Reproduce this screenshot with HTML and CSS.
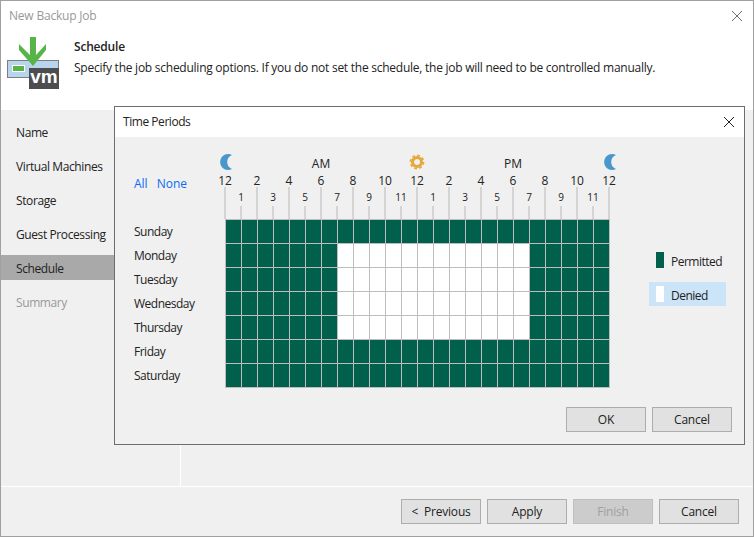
FILE: index.html
```html
<!DOCTYPE html>
<html lang="en">
<head>
    <meta charset="UTF-8">
    <title>New Backup Job</title>
    <link rel="stylesheet" href="styles.css">
</head>
<body>
    <div class="wizard">
        <div class="wizard-header">
            <div class="titlebar">
                <span class="wizard-title">New Backup Job</span>
                <svg class="close-icon" width="12" height="12" viewBox="0 0 12 12"><path d="M1 1L11 11M11 1L1 11" stroke="#6f6f6f" fill="none"/></svg>
            </div>
            <div class="step-info">
                <svg class="logo" width="54" height="54" viewBox="0 0 54 54">
                    <rect x="0.5" y="23.5" width="51" height="17" fill="#b9d5ee" stroke="#7d7d7d"/>
                    <rect x="5" y="28" width="13" height="7" fill="#fff"/>
                    <rect x="6" y="29" width="11" height="5" fill="#56b448"/>
                    <path d="M23 0H29V18L39 7V13L26 29L12 13V7L23 18Z" fill="#56b448"/>
                    <rect x="22" y="31" width="30" height="21" fill="#4d4d4f"/>
                    <text x="37" y="46" class="logo-text" text-anchor="middle">vm</text>
                </svg>
                <div>
                    <h1>Schedule</h1>
                    <p>Specify the job scheduling options. If you do not set the schedule, the job will need to be controlled manually.</p>
                </div>
            </div>
        </div>

        <div class="wizard-body">
            <ul class="steps">
                <li>Name</li>
                <li>Virtual Machines</li>
                <li>Storage</li>
                <li>Guest Processing</li>
                <li class="active">Schedule</li>
                <li class="disabled">Summary</li>
            </ul>
            <div class="step-content"></div>
        </div>

        <div class="wizard-footer">
            <button class="prev">&lt; Previous</button>
            <button>Apply</button>
            <button disabled>Finish</button>
            <button>Cancel</button>
        </div>

        <div class="dialog">
            <div class="dialog-title">
                <span>Time Periods</span>
                <svg width="12" height="12" viewBox="0 0 12 12"><path d="M1 1L11 11M11 1L1 11" stroke="#222" fill="none"/></svg>
            </div>
            <div class="dialog-body">
                <div class="periods">
                    <div class="side">
                        <div class="quick-links"><a>All</a><a>None</a></div>
                        <div class="days">
                            <div>Sunday</div>
                            <div>Monday</div>
                            <div>Tuesday</div>
                            <div>Wednesday</div>
                            <div>Thursday</div>
                            <div>Friday</div>
                            <div>Saturday</div>
                        </div>
                    </div>
                    <div class="chart">
                        <div class="day-parts">
                            <svg width="16" height="18" viewBox="0 0 16 18"><path d="M15 2A8 8 0 1 0 15 16A7.500 7.500 0 0 1 15 2Z" fill="#4a98c9"/></svg>
                            <span>AM</span>
                            <svg width="16" height="18" viewBox="0 0 16 18"><circle cx="8" cy="9" r="4.500" fill="none" stroke="#e5a93b" stroke-width="3"/><circle cx="8" cy="9" r="6.600" fill="none" stroke="#e5a93b" stroke-width="1.600" stroke-dasharray="2.800 2.380"/></svg>
                            <span>PM</span>
                            <svg width="16" height="18" viewBox="0 0 16 18"><path d="M15 2A8 8 0 1 0 15 16A7.500 7.500 0 0 1 15 2Z" fill="#4a98c9"/></svg>
                        </div>
                        <div class="hours" id="hours"></div>
                        <div class="hour-grid" id="hourGrid"></div>
                    </div>
                    <div class="legend">
                        <div class="legend-item"><i class="swatch permitted"></i><span>Permitted</span></div>
                        <div class="legend-item selected"><i class="swatch denied"></i><span>Denied</span></div>
                    </div>
                </div>
                <div class="dialog-buttons">
                    <button>OK</button>
                    <button>Cancel</button>
                </div>
            </div>
        </div>
    </div>

    <script src="script.js"></script>
</body>
</html>
```

FILE: styles.css
```css
* {
    box-sizing: border-box;
    margin: 0;
    padding: 0;
    font-family: 'Open Sans', 'Noto Sans', sans-serif;
}

body {
    width: 754px;
    height: 537px;
    overflow: hidden;
    font-size: 12px;
    color: #222;
    background-color: #f0f0f0;
}

.wizard {
    position: relative;
    display: flex;
    flex-direction: column;
    height: 537px;
    border: 1px solid #a0a0a0;
}

.wizard-header {
    height: 109px;
    background-color: white;
}

.titlebar {
    display: flex;
    justify-content: space-between;
    align-items: center;
    height: 29px;
    padding: 0 10px 0 8px;
}

.wizard-title {
    color: #999;
    letter-spacing: -0.2px;
}

.step-info {
    display: flex;
    padding: 7px 0 0 6px;
}

.logo {
    margin-right: 13px;
}

.logo-text {
    font-family: 'Liberation Sans', sans-serif;
    font-size: 19px;
    font-weight: bold;
    fill: white;
}

h1 {
    font-size: 12px;
    font-weight: 600;
    line-height: 18px;
    margin-top: 1px;
    letter-spacing: -0.2px;
}

.step-info p {
    line-height: 18px;
    margin-top: 3px;
    letter-spacing: -0.25px;
}

.wizard-body {
    flex: 1;
    display: flex;
}

.steps {
    width: 180px;
    padding-top: 5px;
    list-style: none;
    border-right: 1px solid white;
}

.steps li {
    height: 34px;
    line-height: 35px;
    padding-left: 15px;
    letter-spacing: -0.4px;
}

.steps li.active {
    background-color: #a9a9a9;
    width: 113px;
    height: 25px;
    line-height: 27px;
    margin: 4px 0 5px;
}

.steps li.disabled {
    color: #999;
}

.step-content {
    flex: 1;
}

.wizard-footer {
    display: flex;
    justify-content: flex-end;
    gap: 6px;
    height: 50px;
    padding: 12px 14px 0 0;
    border-top: 1px solid white;
}

button {
    width: 80px;
    height: 25px;
    font-size: 12px;
    color: #222;
    background-color: #e1e1e1;
    border: 1px solid #adadad;
    letter-spacing: -0.2px;
}

button.prev {
    word-spacing: 3px;
}

button:disabled {
    color: #a0a0a0;
    background-color: #ccc;
    border-color: #bfbfbf;
}

.dialog {
    position: absolute;
    left: 113px;
    top: 105px;
    width: 631px;
    height: 339px;
    background-color: #f0f0f0;
    border: 1px solid #6d6d6d;
}

.dialog-title {
    display: flex;
    justify-content: space-between;
    align-items: center;
    height: 30px;
    padding: 0 9px 2px 8px;
    background-color: white;
    letter-spacing: -0.45px;
}

.dialog-title svg {
    margin-top: 1px;
}

.periods {
    display: flex;
    padding-top: 15px;
}

.side {
    width: 102px;
    padding-left: 19px;
}

.quick-links {
    display: flex;
    gap: 9px;
    height: 67px;
    padding-top: 23px;
    color: #0a6cf5;
}

.days div {
    height: 24px;
    line-height: 26px;
    letter-spacing: -0.5px;
}

.chart {
    width: 400px;
}

.day-parts {
    display: flex;
    justify-content: space-between;
    align-items: center;
    height: 20px;
}

.day-parts span {
    width: 16px;
    margin-top: 2px;
    display: flex;
    justify-content: center;
}

.hours {
    display: flex;
    height: 47px;
}

.hour {
    width: 16px;
    display: flex;
    flex-direction: column;
    align-items: center;
    justify-content: flex-end;
}

.hour span {
    line-height: 14px;
    margin-bottom: -1px;
}

.hour i {
    width: 2px;
    height: 32px;
    background-color: #d4d4d4;
}

.hour.minor span {
    font-size: 10px;
    line-height: 12px;
    margin-bottom: 3px;
}

.hour.minor i {
    height: 13px;
}

.hour-grid {
    display: grid;
    grid-template-columns: repeat(24, 16px);
    grid-auto-rows: 24px;
    width: 385px;
    margin-left: 8px;
    background-color: #bdbdbd;
    padding: 1px 0 0 1px;
}

.cell {
    background-color: #00604b;
    border-right: 1px solid #bdbdbd;
    border-bottom: 1px solid #bdbdbd;
}

.cell.off {
    background-color: white;
}

.legend {
    margin: 96px 0 0 32px;
}

.legend-item {
    display: flex;
    align-items: center;
    width: 77px;
    height: 24px;
    margin-bottom: 10px;
    padding-left: 7px;
    letter-spacing: -0.5px;
}

.legend-item span {
    line-height: 16px;
    margin-top: 3px;
}

.legend-item.selected {
    background-color: #cce4f7;
}

.swatch {
    width: 8px;
    height: 16px;
    margin-right: 7px;
}

.swatch.permitted {
    background-color: #00604b;
}

.swatch.denied {
    background-color: white;
}

.dialog-buttons {
    display: flex;
    justify-content: flex-end;
    gap: 6px;
    margin-top: 19px;
    padding-right: 12px;
}
```

FILE: script.js
```js
const hours = document.getElementById('hours');
const hourGrid = document.getElementById('hourGrid');

for (let i = 0; i <= 24; i++) {
    const hour = document.createElement('div');
    const label = i % 12 === 0 ? 12 : i % 12;
    hour.className = i % 2 === 0 ? 'hour' : 'hour minor';
    hour.innerHTML = '<span>' + label + '</span><i></i>';
    hours.appendChild(hour);
}

// Monday to Thursday, 7 AM to 7 PM is denied
for (let day = 0; day < 7; day++) {
    for (let h = 0; h < 24; h++) {
        const cell = document.createElement('div');
        const denied = day >= 1 && day <= 4 && h >= 7 && h <= 18;
        cell.className = denied ? 'cell off' : 'cell';
        hourGrid.appendChild(cell);
    }
}
```
